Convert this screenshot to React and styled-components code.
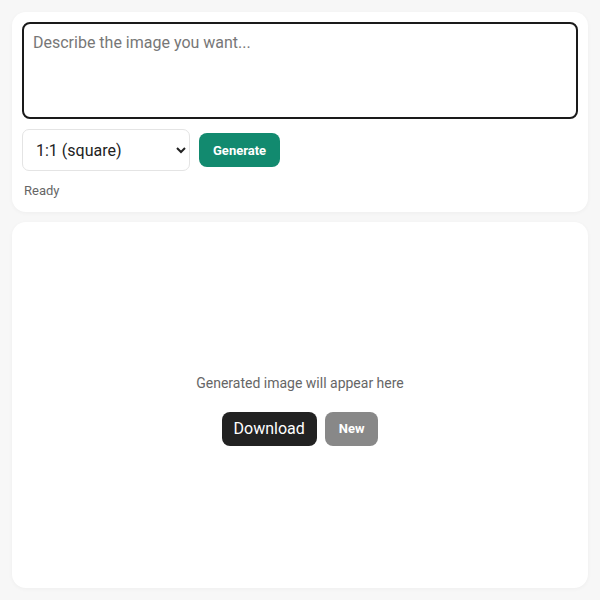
import React, { useState } from "react";
import styled, { createGlobalStyle } from "styled-components";

const GlobalStyle = createGlobalStyle`
  html, body {
    margin: 0;
    background: #f7f7f7;
    font-family: Roboto, "Liberation Sans", sans-serif;
  }
  * { box-sizing: border-box; }
`;

const Page = styled.div`
  display: flex;
  flex-direction: column;
  gap: 10px;
  height: 600px;
  padding: 12px;
`;

const Card = styled.div`
  background: #fff;
  border-radius: 14px;
  box-shadow: 0 1px 4px rgba(0, 0, 0, 0.04);
  padding: 10px 10px ${(p) => (p.$grow ? "10px" : "14px")};
  display: flex;
  flex-direction: column;
  ${(p) => p.$grow && `flex: 1;`}
`;

const Prompt = styled.textarea`
  height: 97px;
  border: 2px solid #1a1a1a;
  border-radius: 8px;
  padding: 9px 9px;
  font-family: inherit;
  font-size: 16px;
  resize: none;
  outline: none;
  color: #222;
  &::placeholder { color: #777; }
`;

const Controls = styled.div`
  display: flex;
  align-items: center;
  gap: 9px;
  margin-top: 10px;
`;

const Ratio = styled.select`
  width: 168px;
  height: 42px;
  border: 1px solid #e4e4e4;
  border-radius: 7px;
  background: #fff;
  font-family: inherit;
  font-size: 16px;
  color: #222;
  padding: 0 8px 0 9px;
`;

const Button = styled.button`
  border: none;
  border-radius: 8px;
  color: #fff;
  font-family: inherit;
  cursor: pointer;
  height: 34px;
  padding: 0 ${(p) => (p.$plain ? "12px" : "14px")};
  background: ${(p) => p.$bg};
  font-size: ${(p) => (p.$plain ? "16px" : "13px")};
  font-weight: ${(p) => (p.$plain ? 400 : 700)};
`;

const Status = styled.div`
  margin-top: 12px;
  padding-left: 2px;
  font-size: 13px;
  color: #666;
`;

const Preview = styled.div`
  flex: 1;
  display: flex;
  flex-direction: column;
  align-items: center;
  justify-content: center;
  gap: 21px;
  padding-top: 10px;
`;

const Hint = styled.div`
  font-size: 14px;
  line-height: 16px;
  color: #666;
`;

const Actions = styled.div`
  display: flex;
  gap: 8px;
`;

export default function App() {
  const [prompt, setPrompt] = useState("");
  return (
    <>
      <GlobalStyle />
      <Page>
        <Card>
          <Prompt
            placeholder="Describe the image you want..."
            value={prompt}
            onChange={(e) => setPrompt(e.target.value)}
          />
          <Controls>
            <Ratio defaultValue="1:1">
              <option value="1:1">1:1 (square)</option>
              <option value="16:9">16:9 (wide)</option>
              <option value="9:16">9:16 (tall)</option>
            </Ratio>
            <Button $bg="#128a6f">Generate</Button>
          </Controls>
          <Status>Ready</Status>
        </Card>
        <Card $grow>
          <Preview>
            <Hint>Generated image will appear here</Hint>
            <Actions>
              <Button $bg="#222" $plain>Download</Button>
              <Button $bg="#888">New</Button>
            </Actions>
          </Preview>
        </Card>
      </Page>
    </>
  );
}
